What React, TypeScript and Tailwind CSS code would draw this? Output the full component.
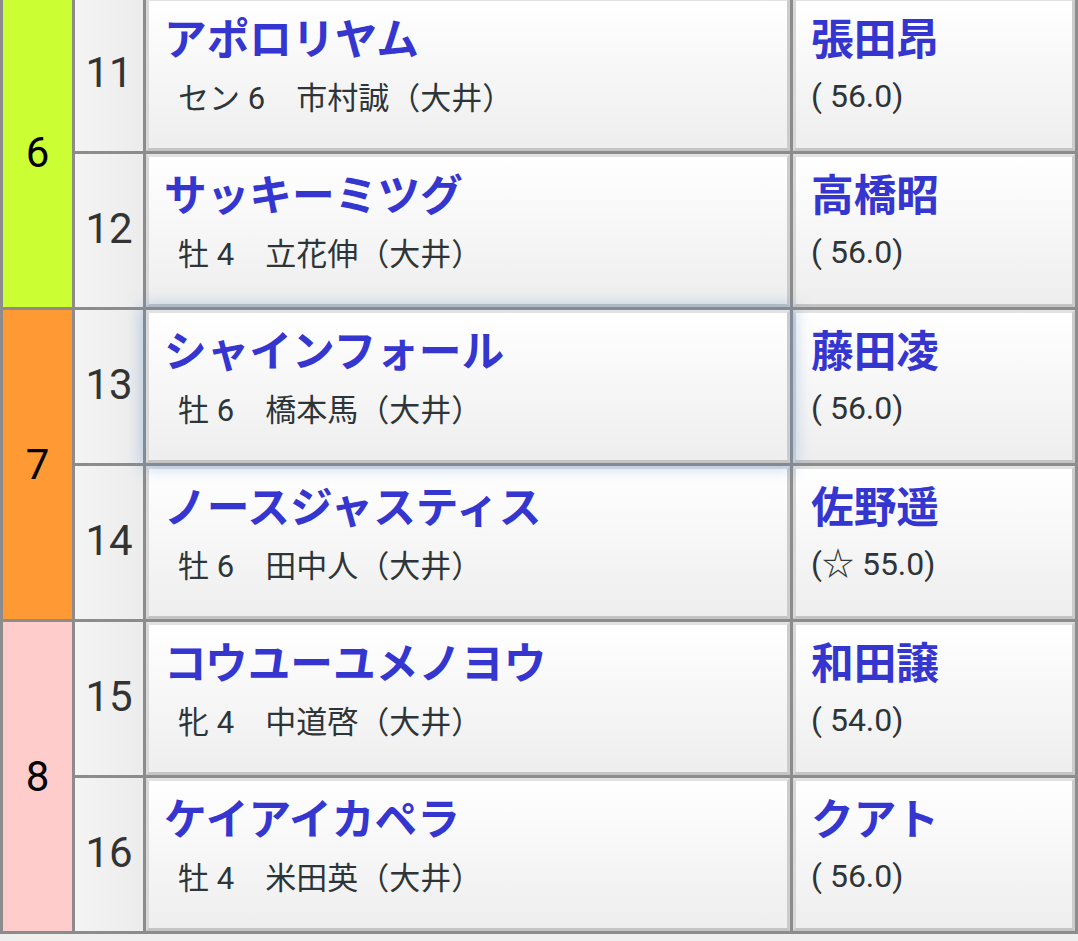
const ROWS = [
  { num: 11, horse: 'アポロリヤム', sex: 'セン', age: 6, trainer: '市村誠（大井）', jockey: '張田昂', weight: '( 56.0)' },
  { num: 12, horse: 'サッキーミツグ', sex: '牡', age: 4, trainer: '立花伸（大井）', jockey: '高橋昭', weight: '( 56.0)' },
  { num: 13, horse: 'シャインフォール', sex: '牡', age: 6, trainer: '橋本馬（大井）', jockey: '藤田凌', weight: '( 56.0)', focus: true },
  { num: 14, horse: 'ノースジャスティス', sex: '牡', age: 6, trainer: '田中人（大井）', jockey: '佐野遥', weight: '(☆ 55.0)' },
  { num: 15, horse: 'コウユーユメノヨウ', sex: '牝', age: 4, trainer: '中道啓（大井）', jockey: '和田譲', weight: '( 54.0)' },
  { num: 16, horse: 'ケイアイカペラ', sex: '牡', age: 4, trainer: '米田英（大井）', jockey: 'クアト', weight: '( 56.0)' },
]

const BRACKETS = [
  { n: 6, cls: 'bg-[#ccff33]' },
  { n: 7, cls: 'bg-[#ff9933]' },
  { n: 8, cls: 'bg-[#ffcccc]' },
]

const cell =
  'bg-gradient-to-b from-white to-[#eeeeee] border-[3px] border-t-[#e2e2e2] border-l-[#d8d8d8] border-r-[#cccccc] border-b-[#c4c4c4]'

export default function App() {
  return (
    <div className="min-h-[941px] bg-[#efefef] overflow-hidden font-['Roboto','Noto_Sans_CJK_JP',sans-serif]">
      <div className="-mt-[5px] grid grid-cols-[69px_68px_644px_282px] grid-rows-[repeat(6,153px)] gap-[3px] p-[3px] bg-[#8c8c8c]">
        {ROWS.map((r, i) => (
          <div key={r.num} className="contents">
            {i % 2 === 0 && (
              <div
                className={`row-span-2 flex items-center justify-center text-[42px] text-black ${BRACKETS[i / 2].cls}`}
              >
                {BRACKETS[i / 2].n}
              </div>
            )}
            {/* 馬番 */}
            <div className="flex items-center justify-center pb-1 bg-gradient-to-r from-[#f4f4f4] to-[#ececec] text-[42px] text-[#333]">
              {r.num}
            </div>
            {/* 馬名 */}
            <div
              className={`${cell} relative pl-[15px] pt-[14px] ${
                r.focus ? 'z-10 shadow-[0_0_16px_4px_rgba(90,140,200,0.4)]' : ''
              }`}
            >
              <div className="text-[42.7px] leading-[50px] font-bold text-[#3535d0]">{r.horse}</div>
              <div className="mt-[13px] pl-[14px] text-[31px] leading-[42px] text-[#2e3539]">
                {r.sex} {r.age}　{r.trainer}
              </div>
            </div>
            {/* 騎手 */}
            <div className={`${cell} pl-[15px] pt-[14px]`}>
              <div className="text-[42.7px] leading-[50px] font-bold text-[#3535d0]">{r.jockey}</div>
              <div className="mt-[10px] text-[32px] leading-[42px] text-[#2e3539]">{r.weight}</div>
            </div>
          </div>
        ))}
      </div>
    </div>
  )
}
